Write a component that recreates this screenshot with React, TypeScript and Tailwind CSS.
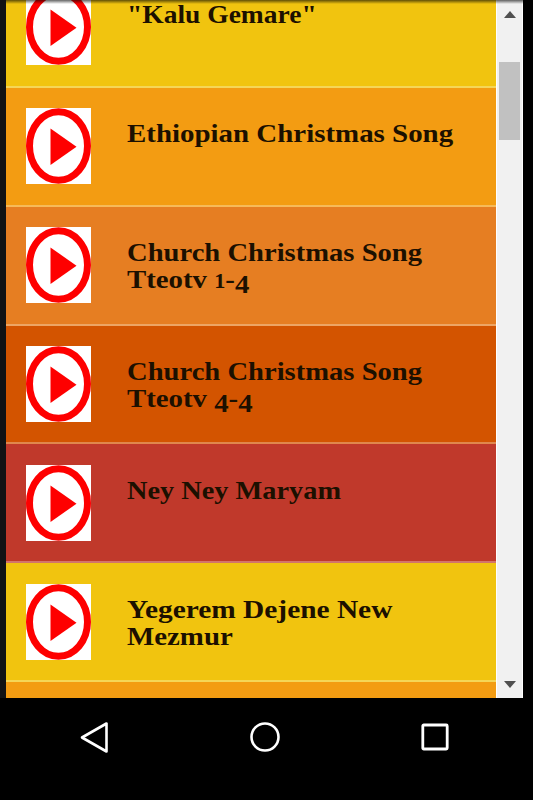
import type { ReactNode } from "react"

type Line = {
    text: ReactNode;
    width: string;
}

type Song = {
    lines: Line[];
    color: string;
}

// old style figures: the 1 is small, the 4 hangs below the baseline
const One = () => <span className="text-[20px]">1</span>
const Four = () => <span className="relative top-[5px]">4</span>

const church: Line = { text: 'Church Christmas Song', width: 'scale-x-[1.1]' };

const songs: Song[] = [
    { lines: [{ text: '"Kalu Gemare"', width: 'scale-x-[1.058]' }], color: 'bg-[#f1c40f]' },
    { lines: [{ text: 'Ethiopian Christmas Song', width: 'scale-x-[1.112]' }], color: 'bg-[#f39c12]' },
    { lines: [church, { text: <>Tteotv <One />-<Four /></>, width: 'scale-x-[1.108]' }], color: 'bg-[#e67e22]' },
    { lines: [church, { text: <>Tteotv <Four />-<Four /></>, width: 'scale-x-[1.108]' }], color: 'bg-[#d35400]' },
    { lines: [{ text: 'Ney Ney Maryam', width: 'scale-x-[1.09]' }], color: 'bg-[#c0392b]' },
    { lines: [{ text: 'Yegerem Dejene New', width: 'scale-x-[1.13]' }, { text: 'Mezmur', width: 'scale-x-[1.11]' }], color: 'bg-[#f1c40f]' },
    { lines: [], color: 'bg-[#f39c12]' },
];

function PlayIcon() {
    return (
        <svg viewBox="0 0 65 76" className="h-[76px] w-[65px] shrink-0 bg-white">
            <ellipse cx="32.5" cy="38" rx="29" ry="34.2" fill="none" stroke="#fe0000" strokeWidth="7" />
            <path d="M24.5 20.5V57L50.5 38.7z" fill="#fe0000" />
        </svg>
    )
}

function SongRow({ song }: { song: Song }) {
    return (
        <li className={`flex h-[118.9px] shrink-0 gap-9 border-b-2 border-white/30 pt-[20.5px] pl-5 ${song.color}`}>
            <PlayIcon />
            <div className="pt-3 font-['Liberation_Serif',serif] text-[26px] leading-[27px] font-bold text-[#1c1000]">
                {song.lines.map((line, i) => (
                    <p key={i} className={`h-[27px] w-fit origin-left whitespace-nowrap ${line.width}`}>{line.text}</p>
                ))}
            </div>
        </li>
    )
}

function Scrollbar() {
    return (
        <div className="flex w-[27px] flex-col items-center justify-between border-x border-white bg-[#f1f1f1] pt-[11px] pb-[10px]">
            <div className="flex w-full flex-col items-center">
                <svg viewBox="0 0 12 7" className="h-[7px] w-3"><path d="M0 7 6 0l6 7z" fill="#505050" /></svg>
                <div className="mt-11 h-[78px] w-[21px] bg-[#c1c1c1]" />
            </div>
            <svg viewBox="0 0 12 7" className="h-[7px] w-3"><path d="M0 0h12L6 7z" fill="#505050" /></svg>
        </div>
    )
}

function App() {
    return (
        <div className="flex h-[800px] w-[533px] flex-col overflow-hidden bg-black">
            <main className="relative flex h-[698px] overflow-hidden border-l-[6px] border-[#111214]">
                <ul className="mt-[-31.1px] flex w-[490px] flex-col">
                    {songs.map((song, i) => <SongRow key={i} song={song} />)}
                </ul>
                <Scrollbar />
                <div className="absolute top-0 left-0 h-1 w-[517px] bg-linear-to-b from-black/60 to-transparent" />
            </main>
            <nav className="flex h-[78px] items-center justify-between pr-[83px] pl-[79px]">
                <svg viewBox="0 0 30 32" className="h-8 w-[30px]" fill="none" stroke="#fff" strokeWidth="2.6" strokeLinejoin="round">
                    <path d="M27.5 2.5v28L3 16.5z" />
                </svg>
                <svg viewBox="0 0 32 32" className="h-8 w-8" fill="none" stroke="#fff" strokeWidth="2.6">
                    <circle cx="16" cy="16" r="13.5" />
                </svg>
                <svg viewBox="0 0 30 30" className="h-[30px] w-[30px]" fill="none" stroke="#fff" strokeWidth="2.8">
                    <rect x="2.8" y="3" width="24.4" height="24" rx="1" />
                </svg>
            </nav>
        </div>
    )
}

export default App
